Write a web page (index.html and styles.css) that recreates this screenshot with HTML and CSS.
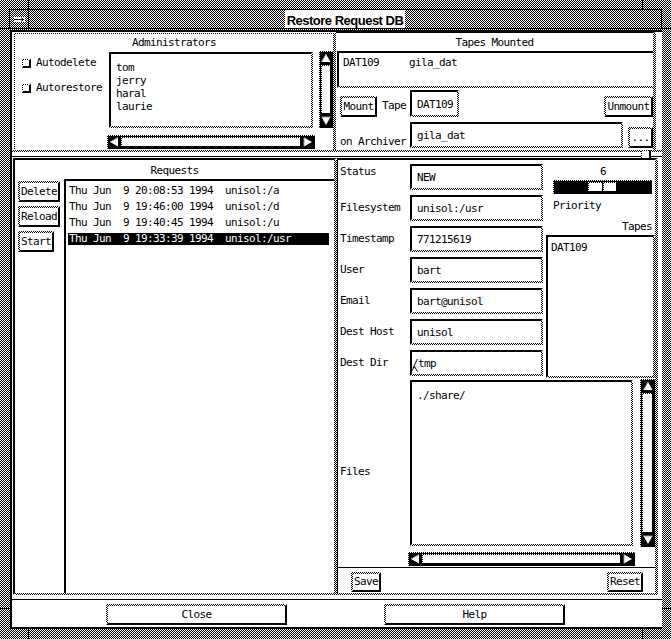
FILE: index.html
```html
<!DOCTYPE html>
<html lang="en">
<head>
<meta charset="utf-8">
<title>Restore Request DB</title>
<link rel="stylesheet" href="styles.css">
</head>
<body>
<div class="wm">
  <span class="tick tk-a"></span>
  <span class="tick tk-b"></span>
  <span class="tick tk-c"></span>
  <span class="tick tk-d"></span>
  <span class="tick tk-e"></span>
  <span class="tick tk-f"></span>
  <span class="tick tk-g"></span>
  <span class="tick tk-h"></span>

  <div class="titlebar">
    <div class="tb-menu">
      <svg width="11" height="5" viewBox="0 0 11 5"><rect x="0" y="0" width="11" height="5" fill="#fff"/><path d="M0 2.5H9.5M7 0.5 9.5 2.5 7 4.5" stroke="#000" fill="none"/></svg>
    </div>
    <div class="tb-title"><span>Restore Request DB</span></div>
  </div>

  <div class="content">
    <div class="pane-top">
      <div class="admin">
        <div class="ftitle ft-admin">Administrators</div>
        <div class="admin-body">
          <div class="checks">
            <div class="check-row"><span class="checkbox"></span>Autodelete</div>
            <div class="check-row"><span class="checkbox"></span>Autorestore</div>
          </div>
          <div class="admin-list">
            <div class="sunk admins">
              <div>tom</div><div>jerry</div><div>haral</div><div>laurie</div>
            </div>
            <div class="vsb admin-v">
              <svg class="arr" viewBox="0 0 10 10"><path d="M5 1 9.5 9H0.5Z" fill="#fff"/><path d="M0.5 9 5 1" stroke="#999" fill="none"/></svg>
              <div class="thumb-v"></div>
              <svg class="arr" viewBox="0 0 10 10"><path d="M0.5 1H9.5L5 9Z" fill="#fff"/><path d="M0.5 1H9.5" stroke="#999" fill="none"/></svg>
            </div>
            <div class="hsb admin-h">
              <svg class="arr" viewBox="0 0 10 10"><path d="M1 5 9 0.5V9.5Z" fill="#fff"/><path d="M1 5 9 0.5" stroke="#999" fill="none"/></svg>
              <div class="thumb-h"></div>
              <svg class="arr" viewBox="0 0 10 10"><path d="M1 0.5 9 5 1 9.5Z" fill="#fff"/><path d="M1 9.5V0.5" stroke="#999" fill="none"/></svg>
            </div>
          </div>
        </div>
      </div>

      <div class="tapes">
        <div class="ftitle ft-tapes">Tapes Mounted</div>
        <div class="sunk tapes-list">DAT109     gila_dat</div>
        <div class="mount-row">
          <div class="btn btn-fill">Mount</div>
          <div class="lbl-r">Tape</div>
          <div class="sunk field f-tape">DAT109</div>
          <div></div>
          <div class="btn btn-fill">Unmount</div>
        </div>
        <div class="arch-row">
          <div class="lbl-l">on Archiver</div>
          <div class="sunk field f-arch">gila_dat</div>
          <div></div>
          <div class="btn btn-fill">...</div>
        </div>
      </div>
    </div>

    <div class="sash"><span class="sash-handle"></span></div>

    <div class="pane-bottom">
      <div class="requests">
        <div class="ftitle ft-req">Requests</div>
        <div class="req-body">
          <div class="req-btns">
            <div class="btn">Delete</div>
            <div class="btn">Reload</div>
            <div class="btn">Start</div>
          </div>
          <div class="req-list">
            <div class="req-row">Thu Jun  9 20:08:53 1994  unisol:/a</div>
            <div class="req-row">Thu Jun  9 19:46:00 1994  unisol:/d</div>
            <div class="req-row">Thu Jun  9 19:40:45 1994  unisol:/u</div>
            <div class="req-row sel">Thu Jun  9 19:33:39 1994  unisol:/usr</div>
          </div>
        </div>
      </div>

      <div class="detail">
        <div class="detail-top">
          <div class="form">
            <div class="frow status"><div class="flabel">Status</div><div class="sunk field wide">NEW</div></div>
            <div class="frow"><div class="flabel">Filesystem</div><div class="sunk field wide">unisol:/usr</div></div>
            <div class="frow"><div class="flabel">Timestamp</div><div class="sunk field wide">771215619</div></div>
            <div class="frow"><div class="flabel">User</div><div class="sunk field wide">bart</div></div>
            <div class="frow"><div class="flabel">Email</div><div class="sunk field wide">bart@unisol</div></div>
            <div class="frow"><div class="flabel">Dest Host</div><div class="sunk field wide">unisol</div></div>
            <div class="frow"><div class="flabel">Dest Dir</div><div class="sunk field wide focus">/tmp<svg class="caret" width="7" height="6" viewBox="0 0 7 6"><path d="M0.5 5.5 3.5 0.5 6.5 5.5" stroke="#000" fill="none"/></svg></div></div>
          </div>
          <div class="side">
            <div class="prio-val">6</div>
            <div class="scale"><div class="sthumb"><i></i><i></i></div></div>
            <div class="prio-label">Priority</div>
            <div class="tapes-label">Tapes</div>
            <div class="sunk tapes-box">DAT109</div>
          </div>
        </div>

        <div class="files">
          <div class="flabel files-l">Files</div>
          <div class="sunk textarea">./share/</div>
          <div class="vsb files-v">
            <svg class="arr" viewBox="0 0 10 10"><path d="M5 1 9.5 9H0.5Z" fill="#fff"/><path d="M0.5 9 5 1" stroke="#999" fill="none"/></svg>
            <div class="thumb-v"></div>
            <svg class="arr" viewBox="0 0 10 10"><path d="M0.5 1H9.5L5 9Z" fill="#fff"/><path d="M0.5 1H9.5" stroke="#999" fill="none"/></svg>
          </div>
          <div class="hsb files-h">
            <svg class="arr" viewBox="0 0 10 10"><path d="M1 5 9 0.5V9.5Z" fill="#fff"/><path d="M1 5 9 0.5" stroke="#999" fill="none"/></svg>
            <div class="thumb-h"></div>
            <svg class="arr" viewBox="0 0 10 10"><path d="M1 0.5 9 5 1 9.5Z" fill="#fff"/><path d="M1 9.5V0.5" stroke="#999" fill="none"/></svg>
          </div>
        </div>
        <div class="sep"></div>
        <div class="save-row">
          <div class="btn btn-s">Save</div>
          <div class="btn btn-s">Reset</div>
        </div>
      </div>
    </div>

    <div class="gap3"></div>
    <div class="sepline"></div>
    <div class="actions">
      <div class="btn big">Close</div>
      <div class="btn big">Help</div>
    </div>
  </div>
</div>
</body>
</html>
```

FILE: styles.css
```css
/* 1-bit stipple used for all grey shading */
:root {
  --st: repeating-conic-gradient(#000 0% 25%, #fff 0% 50%);
}

* { box-sizing: border-box; }

html, body { margin: 0; padding: 0; }

body {
  width: 671px;
  height: 639px;
  overflow: hidden;
  font-family: "DejaVu Sans Mono", monospace;
  font-size: 11px;
  line-height: 12px;
  letter-spacing: -0.62px;
  color: #000;
}

/* ---------- window manager frame ---------- */
.wm {
  position: relative;
  width: 671px;
  height: 639px;
  padding: 9px 9px 10px 9px;
  background: var(--st) 0 0 / 2px 2px;
  display: flex;
  flex-direction: column;
}

.tick { position: absolute; background: #000; }
.tk-a { left: 28px; top: 0; width: 1px; height: 9px; }
.tk-b { left: 642px; top: 0; width: 1px; height: 9px; }
.tk-c { left: 0; top: 28px; width: 9px; height: 1px; }
.tk-d { left: 0; top: 608px; width: 10px; height: 1px; }
.tk-e { left: 28px; top: 629px; width: 1px; height: 10px; }
.tk-f { left: 642px; top: 629px; width: 1px; height: 10px; }
.tk-g { left: 662px; top: 28px; width: 9px; height: 1px; }
.tk-h { left: 662px; top: 608px; width: 9px; height: 1px; }

.titlebar {
  flex: none;
  height: 20px;
  display: flex;
  border: 1px solid #000;
}
.tb-menu {
  width: 19px;
  border-right: 1px solid #000;
  background: var(--st) 0 0 / 2px 2px;
  display: flex;
  align-items: center;
  justify-content: center;
}
.tb-menu svg { display: block; }
.tb-title {
  flex: 1;
  background: var(--st) 0 0 / 2px 2px;
  display: flex;
  justify-content: center;
}
.tb-title span {
  display: block;
  height: 18px;
  overflow: hidden;
  background: #fff;
  padding: 0 2px;
  font-family: "Liberation Sans", Arial, sans-serif;
  font-weight: bold;
  font-size: 13px;
  line-height: 21px;
  letter-spacing: -0.5px;
}

/* ---------- shared widget looks ---------- */
.sunk {
  border: 2px solid;
  border-color: #000 transparent transparent #000;
  background: linear-gradient(#fff, #fff) padding-box, var(--st) 0 0 / 2px 2px border-box;
}

.btn {
  display: flex;
  align-items: center;
  justify-content: center;
  height: 21px;
  padding: 0 1px;
  white-space: pre;
  border: 2px solid;
  border-color: transparent #000 #000 transparent;
  background: linear-gradient(#fff, #fff) padding-box, var(--st) 0 0 / 2px 2px border-box;
}
.btn-fill { width: 100%; }

.field {
  white-space: pre;
  padding: 6px 5px 0;
}

.ftitle {
  height: 12px;
  text-align: center;
  flex: none;
}

/* scrollbars */
.vsb, .hsb {
  display: flex;
  align-items: center;
  padding: 1px;
  border: 1px solid;
  border-color: transparent #000 #000 transparent;
  background: linear-gradient(#000, #000) padding-box, var(--st) 0 0 / 2px 2px border-box;
}
.vsb { flex-direction: column; }
.arr { width: 10px; height: 10px; flex: none; display: block; }
.thumb-v, .thumb-h {
  flex: 1;
  align-self: stretch;
  border: 1px solid;
  border-color: transparent #000 #000 transparent;
  background: linear-gradient(#fff, #fff) padding-box, var(--st) 0 0 / 2px 2px border-box;
}
.thumb-v { margin: 2px 0; }
.thumb-h { margin: 0 2px; }

/* ---------- client area ---------- */
.content {
  flex: 1;
  margin: 1px 0 0 1px;
  background: #fff;
  border-top: 2px solid #000;
  border-left: 2px solid #000;
  border-bottom: 2px solid #000;
  display: flex;
  flex-direction: column;
}

.pane-top {
  height: 118px;
  flex: none;
  display: flex;
}

/* Administrators */
.admin {
  margin: 1px 0 0 2px;
  width: 322px;
  border-style: solid;
  border-width: 1px 3px 0 1px;
  border-color: transparent;
  background: linear-gradient(#fff, #fff) padding-box, var(--st) 0 0 / 2px 2px border-box;
  display: flex;
  flex-direction: column;
}
.ft-admin { margin-top: 3px; }
.admin-body { flex: 1; display: flex; }
.checks { width: 92px; padding-top: 8px; }
.check-row {
  display: flex;
  align-items: center;
  height: 12px;
  padding-left: 7px;
}
.check-row + .check-row { margin-top: 13px; }
.checkbox {
  width: 9px;
  height: 9px;
  margin-right: 5px;
  border-style: solid;
  border-width: 1px 2px 2px 1px;
  border-color: transparent #000 #000 transparent;
  background: linear-gradient(#fff, #fff) padding-box, var(--st) 0 0 / 2px 2px border-box;
}
.admin-list {
  display: grid;
  grid-template-columns: 212px 14px;
  grid-template-rows: 79px 22px;
}
.admins {
  margin: 3px 6px 0 2px;
  padding: 7px 0 0 5px;
  line-height: 13px;
}
.admin-v {
  margin-top: 2px;
  height: 77px;
}
.admin-h {
  grid-row: 2;
  grid-column: 1;
  margin-top: 7px;
  width: 208px;
  height: 14px;
}

/* Tapes Mounted */
.tapes {
  width: 320px;
  border-style: solid;
  border-width: 1px 3px 0 0;
  border-color: #000 transparent transparent transparent;
  background: linear-gradient(#fff, #fff) padding-box, var(--st) 0 0 / 2px 2px border-box;
  display: flex;
  flex-direction: column;
}
.ft-tapes { margin-top: 4px; }
.tapes-list {
  margin: 2px 0 0 1px;
  height: 37px;
  border-right-width: 0;
  padding: 4px 0 0 4px;
  white-space: pre;
}
.mount-row {
  display: grid;
  grid-template-columns: 37px 33px 49px 1fr 49px;
  align-items: end;
  height: 27px;
  margin-top: 2px;
  padding-left: 4px;
}
.lbl-r { text-align: right; padding-right: 4px; margin-bottom: 5px; }
.f-tape { height: 27px; padding-top: 7px; }
.arch-row {
  display: grid;
  grid-template-columns: 70px 213px 5px 25px;
  align-items: end;
  height: 26px;
  margin-top: 5px;
  padding-left: 4px;
}
.f-arch { height: 26px; }

/* pane sash */
.sash {
  position: relative;
  flex: none;
  height: 7px;
  border-top: 2px solid transparent;
  border-bottom: 1px solid #000;
  background: linear-gradient(#fff, #fff) padding-box, var(--st) 0 0 / 2px 2px border-box;
}
.sash-handle {
  position: absolute;
  left: 629px;
  top: -2px;
  width: 10px;
  height: 10px;
  border-style: solid;
  border-width: 1px 2px 2px 1px;
  border-color: transparent #000 #000 transparent;
  background: linear-gradient(#fff, #fff) padding-box, var(--st) 0 0 / 2px 2px border-box;
}

.pane-bottom {
  height: 439px;
  flex: none;
  display: flex;
}

/* Requests */
.requests {
  margin: 1px 0 0 1px;
  width: 324px;
  height: 437px;
  border-style: solid;
  border-width: 2px 3px 2px 2px;
  border-color: #000 transparent transparent #000;
  background: linear-gradient(#fff, #fff) padding-box, var(--st) 0 0 / 2px 2px border-box;
  display: flex;
  flex-direction: column;
}
.ft-req { margin-top: 5px; }
.req-body { flex: 1; display: flex; margin-top: 2px; }
.req-btns {
  width: 49px;
  padding: 2px 0 0 3px;
  display: flex;
  flex-direction: column;
  align-items: flex-start;
  gap: 4px;
}
.req-list {
  flex: 1;
  border-top: 2px solid #000;
  border-left: 2px solid #000;
  padding: 4px 5px 0 2px;
}
.req-row {
  height: 12px;
  margin-bottom: 4px;
  padding-left: 1px;
  white-space: pre;
}
.req-row.sel { background: #000; color: #fff; }

/* request detail form */
.detail {
  margin-top: 1px;
  width: 321px;
  height: 437px;
  border-style: solid;
  border-width: 2px 3px 2px 1px;
  border-color: #000 transparent transparent #000;
  background: linear-gradient(#fff, #fff) padding-box, var(--st) 0 0 / 2px 2px border-box;
  display: flex;
  flex-direction: column;
}
.detail-top { display: flex; height: 218px; flex: none; }
.form {
  width: 205px;
  padding-top: 4px;
  display: flex;
  flex-direction: column;
  gap: 5px;
}
.frow { display: flex; align-items: center; height: 26px; }
.flabel { width: 72px; padding-left: 2px; flex: none; }
.frow.status .flabel { align-self: flex-start; margin-top: 2px; }
.wide { width: 133px; height: 26px; }
.focus { position: relative; padding-left: 0; }
.caret { position: absolute; left: -1px; top: 14px; display: block; }

.side { width: 109px; margin-left: 3px; padding-top: 6px; }
.prio-val { width: 100px; margin-left: 7px; text-align: center; }
.scale {
  margin: 2px 0 0 7px;
  width: 99px;
  height: 14px;
  padding: 1px 0 0 34px;
  border: 1px solid;
  border-color: transparent #000 #000 transparent;
  background: linear-gradient(#000, #000) padding-box, var(--st) 0 0 / 2px 2px border-box;
}
.sthumb { width: 28px; height: 9px; display: flex; gap: 1px; }
.sthumb i {
  flex: 1;
  border-style: solid;
  border-width: 1px 0 0 1px;
  border-color: transparent;
  background: linear-gradient(#fff, #fff) padding-box, var(--st) 0 0 / 2px 2px border-box;
}
.prio-label { margin-top: 6px; padding-left: 7px; }
.tapes-label { margin-top: 9px; text-align: right; padding-right: 3px; }
.tapes-box {
  margin-top: 2px;
  height: 143px;
  padding: 5px 0 0 3px;
}

.files {
  display: grid;
  grid-template-columns: 72px 223px 7px 15px;
  grid-template-rows: 169px 20px;
  height: 189px;
  flex: none;
}
.files-l { margin-top: 88px; }
.textarea {
  grid-column: 2;
  margin-top: 2px;
  height: 166px;
  padding: 8px 5px 0;
  white-space: pre;
}
.files-v {
  grid-column: 4;
  margin-top: 1px;
  height: 168px;
  width: 15px;
}
.files-h {
  grid-column: 2 / 4;
  grid-row: 2;
  margin: 5px 0 0 -2px;
  width: 227px;
  height: 14px;
}
.sep { height: 1px; background: #000; flex: none; }
.save-row {
  flex: 1;
  display: flex;
  justify-content: space-between;
  align-items: flex-start;
  padding: 4px 12px 0 13px;
}
.btn-s { height: 20px; }

/* dialog action area */
.gap3 { height: 3px; flex: none; }
.sepline { height: 1px; background: #000; flex: none; }
.actions {
  flex: 1;
  display: flex;
  align-items: flex-start;
  padding: 4px 0 0 94px;
  gap: 97px;
}
.big { width: 181px; height: 21px; }
```
